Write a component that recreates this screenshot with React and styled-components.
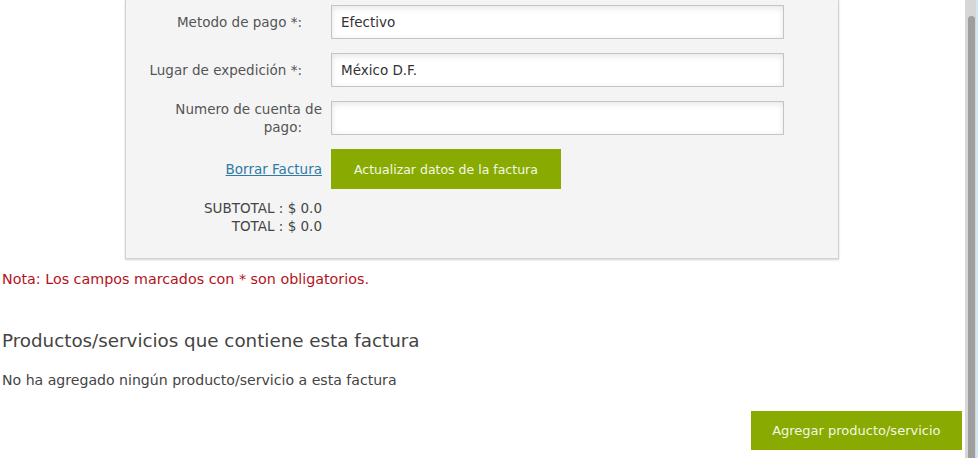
import React from "react";
import styled, { createGlobalStyle } from "styled-components";

const GlobalStyle = createGlobalStyle`
  html, body {
    margin: 0;
    padding: 0;
    background: #fff;
    overflow: hidden;
  }
  body {
    font-family: "DejaVu Sans", Verdana, sans-serif;
    font-size: 14px;
    color: #444;
  }
`;

const Page = styled.div`
  width: 964px;
  padding: 0 2px;
  box-sizing: border-box;
`;

const Panel = styled.div`
  width: 714px;
  box-sizing: border-box;
  margin: 0 auto;
  background: #f4f4f4;
  border: 1px solid #d2d2d2;
  border-top: none;
  box-shadow: 0 1px 2px rgba(0, 0, 0, 0.18);
  padding: 5px 0 23px 11px;
  display: flex;
  flex-direction: column;
  gap: 14px;
  font-size: 13.5px;
`;

const Row = styled.div`
  display: flex;
  align-items: center;
  gap: 9px;
  height: ${(p) => p.h || 34}px;
`;

const Label = styled.label`
  width: 185px;
  text-align: right;
  color: #555;
  line-height: 18px;
`;

const Spacer = styled.span`
  display: inline-block;
  width: 20px;
`;

const Input = styled.input`
  width: 453px;
  height: 34px;
  box-sizing: border-box;
  border: 1px solid #c4c4c4;
  background: #fff;
  box-shadow: inset 0 3px 6px rgba(0, 0, 0, 0.07), inset 0 0 6px rgba(0, 0, 0, 0.04);
  padding: 0 9px;
  font-family: "DejaVu Sans", Verdana, sans-serif;
  font-size: 13.5px;
  color: #333;
  outline: none;
`;

const LinkCell = styled.div`
  width: 185px;
  text-align: right;
`;

const Link = styled.a`
  color: #2d7ba6;
  text-decoration: underline;
  cursor: pointer;
`;

const Button = styled.button`
  height: ${(p) => p.h || 40}px;
  padding: 0 ${(p) => p.px || 23}px;
  border: none;
  background: #89aa00;
  color: #f4f7e6;
  font-family: "DejaVu Sans", Verdana, sans-serif;
  font-size: ${(p) => p.fs || 12.5}px;
  cursor: pointer;
`;

const Totals = styled.div`
  width: 185px;
  text-align: right;
  line-height: 18px;
  color: #444;
  margin-top: -4px;
`;

const Note = styled.p`
  margin: 11px 0 0;
  color: #b3121c;
  line-height: 18px;
  font-size: 14.3px;
`;

const Heading = styled.h3`
  margin: 42px 0 0;
  font-size: 18.3px;
  font-weight: normal;
  color: #444;
  line-height: 22px;
`;

const Empty = styled.p`
  margin: 19px 0 0;
  line-height: 18px;
  font-size: 14.1px;
`;

const Actions = styled.div`
  display: flex;
  justify-content: flex-end;
  margin-top: 22px;
`;

const ScrollTrack = styled.div`
  position: fixed;
  top: 0;
  right: 0;
  width: 13px;
  height: 100%;
  background: #d6d6d6;
  border-right: 2px solid #cfe6f3;
  box-sizing: border-box;
`;

const ScrollThumb = styled.div`
  position: absolute;
  top: 16px;
  left: 3px;
  width: 7px;
  bottom: 0;
  background: #9e9e9e;
  border-radius: 4px 4px 0 0;
`;

const fields = [
  { label: "Metodo de pago *:", value: "Efectivo" },
  { label: "Lugar de expedición *:", value: "México D.F." },
  { label: "Numero de cuenta de pago:", value: "" },
];

export default function App() {
  return (
    <>
      <GlobalStyle />
      <Page>
        <Panel>
          {fields.map((f) => (
            <Row key={f.label}>
              <Label>
                {f.label}
                <Spacer />
              </Label>
              <Input defaultValue={f.value} />
            </Row>
          ))}
          <Row h={40}>
            <LinkCell>
              <Link>Borrar Factura</Link>
            </LinkCell>
            <Button>Actualizar datos de la factura</Button>
          </Row>
          <Totals>
            SUBTOTAL : $ 0.0
            <br />
            TOTAL : $ 0.0
          </Totals>
        </Panel>
        <Note>Nota: Los campos marcados con * son obligatorios.</Note>
        <Heading>Productos/servicios que contiene esta factura</Heading>
        <Empty>No ha agregado ningún producto/servicio a esta factura</Empty>
        <Actions>
          <Button h={39} px={21.5} fs={13}>Agregar producto/servicio</Button>
        </Actions>
      </Page>
      <ScrollTrack>
        <ScrollThumb />
      </ScrollTrack>
    </>
  );
}
